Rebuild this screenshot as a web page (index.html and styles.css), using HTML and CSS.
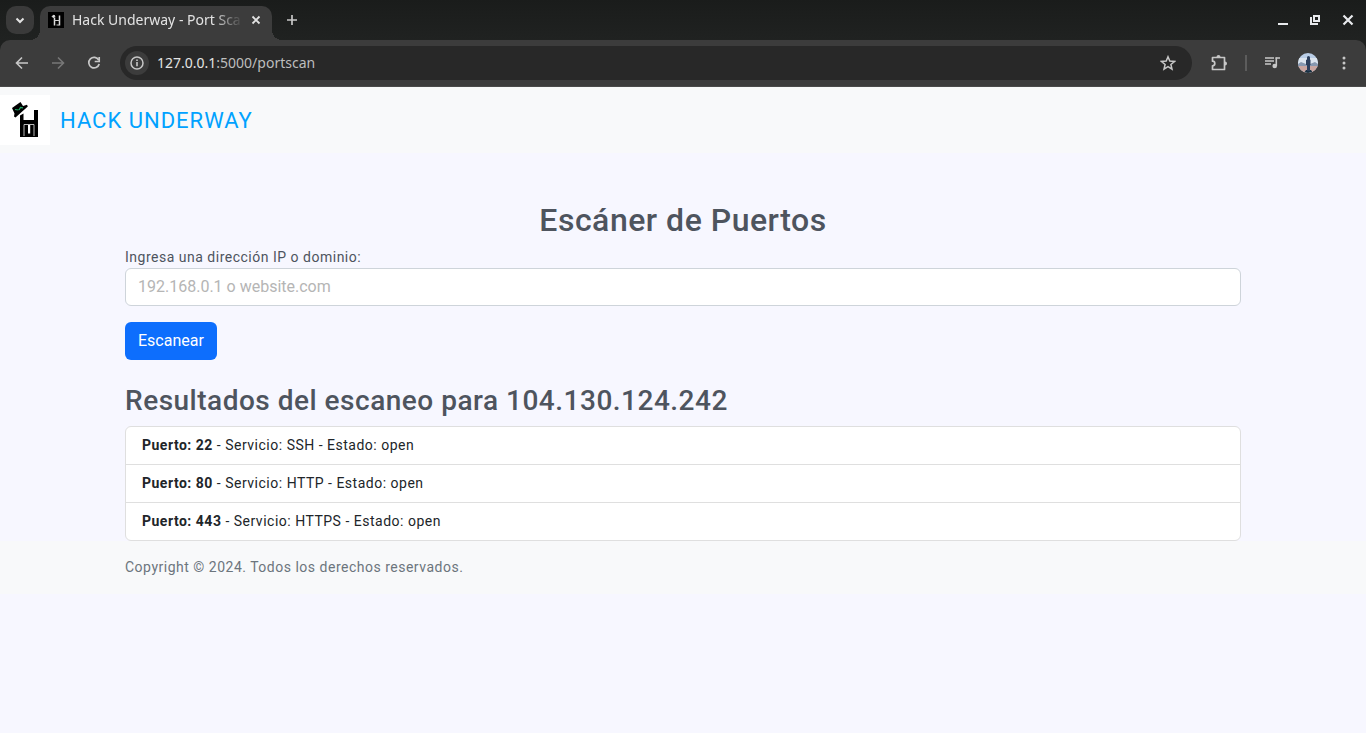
FILE: index.html
```html
<!DOCTYPE html>
<html lang="es">
<head>
<meta charset="utf-8">
<meta name="viewport" content="width=device-width, initial-scale=1">
<title>Hack Underway - Port Scanner</title>
<link rel="stylesheet" href="styles.css">
</head>
<body>
<div class="browser">
  <div class="tabstrip">
    <button class="icon-btn tab-search" aria-label="Buscar pestañas"><svg width="28" height="28" viewBox="0 0 28 28"><path d="M10.500 12.500 14 16l3.500-3.500" fill="none" stroke="currentColor" stroke-width="2"/></svg></button>
    <div class="tab">
      <svg class="favicon" width="16" height="16" viewBox="0 0 16 16"><rect width="16" height="16" fill="#000"/><path d="M4 4.500 6 3l1 1.500-2 1z" fill="#ddd" stroke="#ddd"/><path d="M6.500 5.500v8M11.500 3.500v10" stroke="#ddd" stroke-width="1.500"/><path d="M6 8.500h6M8.500 13h2.500" fill="none" stroke="#ccc"/></svg>
      <span class="tab-title">Hack Underway - Port Sca</span>
      <button class="icon-btn tab-close" aria-label="Cerrar pestaña"><svg width="16" height="16" viewBox="0 0 16 16"><path d="m4.500 4.500 7 7m0-7-7 7" stroke="currentColor" stroke-width="1.800"/></svg></button>
    </div>
    <button class="icon-btn new-tab" aria-label="Nueva pestaña"><svg width="16" height="16" viewBox="0 0 16 16"><path d="M8 3v10M3 8h10" stroke="currentColor" stroke-width="1.700"/></svg></button>
    <div class="window-controls">
      <button class="icon-btn" aria-label="Minimizar"><svg width="16" height="16" viewBox="0 0 16 16"><path d="M2 12h10" stroke="currentColor" stroke-width="2"/></svg></button>
      <button class="icon-btn" aria-label="Restaurar"><svg width="16" height="16" viewBox="0 0 16 16"><path d="M6 4h5v5H6z" fill="none" stroke="currentColor" stroke-width="2"/><path d="M3 5v7h7" fill="none" stroke="currentColor" stroke-width="2"/></svg></button>
      <button class="icon-btn" aria-label="Cerrar"><svg width="16" height="16" viewBox="0 0 16 16"><path d="m3.500 3.500 9 9m0-9-9 9" stroke="currentColor" stroke-width="2.200"/></svg></button>
    </div>
  </div>
  <div class="toolbar">
    <div class="nav-buttons">
      <button class="icon-btn" aria-label="Atrás"><svg width="16" height="16" viewBox="0 0 16 16"><path d="M14 8H3M8 2.500 2.500 8 8 13.500" fill="none" stroke="currentColor" stroke-width="1.600"/></svg></button>
      <button class="icon-btn muted" aria-label="Adelante"><svg width="16" height="16" viewBox="0 0 16 16"><path d="M2 8h11M8 2.500 13.500 8 8 13.500" fill="none" stroke="currentColor" stroke-width="1.600"/></svg></button>
      <button class="icon-btn" aria-label="Recargar"><svg width="16" height="16" viewBox="0 0 16 16"><path d="M12.700 5A5.300 5.300 0 1 0 13.200 9" fill="none" stroke="currentColor" stroke-width="1.700"/><path d="M13.200 2v4.500H8.700" fill="none" stroke="currentColor" stroke-width="1.700"/></svg></button>
    </div>
    <div class="omnibox">
      <button class="icon-btn site-info" aria-label="Información del sitio"><svg width="16" height="16" viewBox="0 0 16 16"><circle cx="8" cy="8" r="6" fill="none" stroke="currentColor" stroke-width="1.500"/><path d="M8 7v4.200M8 4.500v1.600" stroke="currentColor" stroke-width="1.600"/></svg></button>
      <span class="url">127.0.0.1<span class="url-path">:5000/portscan</span></span>
      <button class="icon-btn" aria-label="Añadir a marcadores"><svg width="16" height="16" viewBox="0 0 16 16"><path d="m8 1.800 1.800 4.300 4.700.4-3.600 3 1.100 4.600L8 11.700l-4 2.400 1.100-4.600-3.600-3 4.700-.4z" fill="none" stroke="currentColor" stroke-width="1.500"/></svg></button>
    </div>
    <div class="toolbar-actions">
      <button class="icon-btn" aria-label="Extensiones"><svg width="18" height="18" viewBox="0 0 18 18"><path d="M2.500 3.500h12v12h-12v-3.700a2.300 2.300 0 0 0 0-4.600z" fill="none" stroke="currentColor" stroke-width="1.700" stroke-linejoin="round"/><path d="M6.500 3a2 2 0 0 1 4 0zM15 7.500a2 2 0 0 1 0 4z" fill="currentColor"/></svg></button>
      <span class="divider"></span>
      <button class="icon-btn" aria-label="Controles multimedia"><svg width="16" height="16" viewBox="0 0 16 16"><path d="M1 3h9M1 6h9M1 9h6M11.500 3H16" stroke="currentColor" stroke-width="1.500"/><path d="M12.300 2.500V11" stroke="currentColor" stroke-width="1.600"/><circle cx="10.700" cy="11" r="2.300" fill="currentColor"/></svg></button>
      <button class="icon-btn" aria-label="Perfil"><svg width="20" height="20" viewBox="0 0 20 20"><defs><clipPath id="round"><circle cx="10" cy="10" r="10"/></clipPath></defs><g clip-path="url(#round)"><path fill="#b9cde6" d="M0 0h20v20H0z"/><path fill="#dce5ef" d="M0 5h20v6H0z"/><path fill="#8798b0" d="M0 11 3 9l5 2h4l5-2 3 2v2H0z"/><path fill="#c9a6a1" d="M0 13h20v7H0z"/><path fill="#193243" d="M6 20l2-3h5l2 3z"/><path fill="#2c3f5c" d="M8 7l1-.5V4.500a1.500 1.500 0 0 1 3 0v2l.5.500v5H12V18H9v-6H8z"/></g></svg></button>
      <button class="icon-btn" aria-label="Menú"><svg width="16" height="16" viewBox="0 0 16 16" fill="currentColor"><circle cx="8" cy="3" r="1.500"/><circle cx="8" cy="8" r="1.500"/><circle cx="8" cy="13" r="1.500"/></svg></button>
    </div>
  </div>
</div>
<header class="navbar">
  <a class="brand" href="#">
    <svg class="logo" width="50" height="50" viewBox="0 0 50 50"><rect width="50" height="50" fill="#fff"/><path d="M12 13 20.500 7l2.500 4 4-1.200.8 1.700L15.500 22.500l-1.500-1 .5-3z"/><path d="m15 14.500 3.500.5M19 15l1.500-2.500 2.500.3" fill="none" stroke="#20a464" stroke-width="1.200"/><path d="M20 20.500l3.500-2V25H34V15h4v27H20z"/><path d="M24 41V29.500h10V41" fill="none" stroke="#ccc" stroke-width=".9"/><path d="M28 30h2.200v8.500H28z" fill="#fff"/></svg>
    <span>HACK UNDERWAY</span>
  </a>
</header>
<main class="container">
  <h1 class="title">Escáner de Puertos</h1>
  <form class="scan-form">
    <label for="target">Ingresa una dirección IP o dominio:</label>
    <input class="field" id="target" type="text" placeholder="192.168.0.1 o website.com">
    <button class="submit" type="button">Escanear</button>
  </form>
  <h2 class="subtitle">Resultados del escaneo para 104.130.124.242</h2>
  <ul class="results">
    <li><strong>Puerto: 22</strong> - Servicio: SSH - Estado: open</li>
    <li><strong>Puerto: 80</strong> - Servicio: HTTP - Estado: open</li>
    <li><strong>Puerto: 443</strong> - Servicio: HTTPS - Estado: open</li>
  </ul>
</main>
<footer class="footer"><div class="container">Copyright © 2024. Todos los derechos reservados.</div></footer>
</body>
</html>
```
FILE: styles.css
```css
* { box-sizing: border-box; }
body {
  margin: 0;
  background: #f7f7ff;
  color: #4e545e;
  font: 14px/21px Roboto, sans-serif;
  letter-spacing: 0.036em;
}
h1, h2, ul { margin: 0; padding: 0; }
button, input { font: inherit; letter-spacing: normal; }
svg { display: block; }

.browser {
  background: #1e201f;
  color: #c7c7c7;
  font: 14px/20px "Noto Sans", sans-serif;
  letter-spacing: normal;
}
.icon-btn {
  display: flex;
  flex: none;
  align-items: center;
  justify-content: center;
  border: 0;
  padding: 0;
  background: none;
  color: inherit;
}
.tabstrip {
  display: flex;
  align-items: center;
  height: 40px;
  padding: 0 10px 0 6px;
  background: linear-gradient(#1a1c1b, #202221);
}
.tab-search { border-radius: 10px; background: #3a3a3a; color: #e3e3e3; }
.tab {
  position: relative;
  display: flex;
  align-items: center;
  align-self: flex-end;
  width: 232px;
  height: 34px;
  margin-left: 6px;
  padding: 0 8px 6px;
  border-radius: 10px 10px 0 0;
  background: #3c3c3c;
  color: #e3e3e3;
}
.tab::before, .tab::after {
  content: "";
  position: absolute;
  bottom: 0;
  width: 10px;
  height: 10px;
}
.tab::before { right: 100%; background: radial-gradient(circle at 0 0, transparent 10px, #3c3c3c 10px); }
.tab::after { left: 100%; background: radial-gradient(circle at 100% 0, transparent 10px, #3c3c3c 10px); }
.tab-title {
  flex: 1;
  margin-left: 8px;
  white-space: nowrap;
  -webkit-mask-image: linear-gradient(90deg, #000 80%, transparent 97%);
  mask-image: linear-gradient(90deg, #000 80%, transparent 97%);
}
.new-tab { margin-left: 12px; }
.window-controls { display: flex; gap: 16px; margin-left: auto; color: #e8eaed; }
.toolbar {
  display: flex;
  align-items: center;
  gap: 18px;
  height: 47px;
  padding: 0 14px;
  border-radius: 10px 10px 0 0;
  border-bottom: 1px solid #4a4a4a;
  background: #3c3c3c;
}
.nav-buttons { display: flex; gap: 20px; }
.muted { color: #777; }
.omnibox {
  display: flex;
  flex: 1;
  align-items: center;
  height: 34px;
  padding: 0 16px 0 5px;
  border-radius: 17px;
  background: #282828;
}
.site-info { width: 24px; height: 24px; border-radius: 50%; background: #3c3c3c; }
.url { flex: 1; margin-left: 8px; color: #e3e3e3; }
.url-path { color: #bdbdbd; }
.toolbar-actions { display: flex; align-items: center; gap: 18px; }
.divider { width: 2px; height: 16px; margin: 0 -1px; background: #5c5c5c; }

.navbar { padding: 8px 0; background: #f8f9fa; }
.brand {
  display: inline-flex;
  align-items: center;
  gap: 10px;
  color: #00a2ff;
  font-size: 22px;
  letter-spacing: 1px;
  text-decoration: none;
  vertical-align: top;
}
.container { max-width: 1140px; margin: 0 auto; padding: 0 12px; }
main.container { padding-top: 48px; }
.title { margin-bottom: 8px; font-size: 32px; font-weight: 500; line-height: 38px; text-align: center; }
.scan-form { display: grid; justify-items: start; margin-bottom: 24px; }
.field {
  width: 100%;
  height: 38px;
  margin-bottom: 16px;
  padding: 5px 12px 7px;
  border: 1px solid #ced4da;
  border-radius: 6px;
  background: #fff;
  color: #212529;
  font-size: 16px;
  line-height: 24px;
}
.field::placeholder { color: #b5b5b5; opacity: 1; }
.submit {
  padding: 7px 13px;
  border: 0;
  border-radius: 6px;
  background: #0d6efd;
  color: #fff;
  font-size: 16px;
  line-height: 24px;
}
.subtitle { margin-bottom: 8px; font-size: 28px; font-weight: 500; line-height: 34px; }
.results {
  border: 1px solid #dfdfdf;
  border-radius: 6px;
  background: #fff;
  color: #212529;
  list-style: none;
}
.results li { padding: 8px 16px; }
.results li + li { border-top: 1px solid #dfdfdf; }
.footer { padding: 16px 0; background: #f8f9fa; color: #6c757d; }
```
